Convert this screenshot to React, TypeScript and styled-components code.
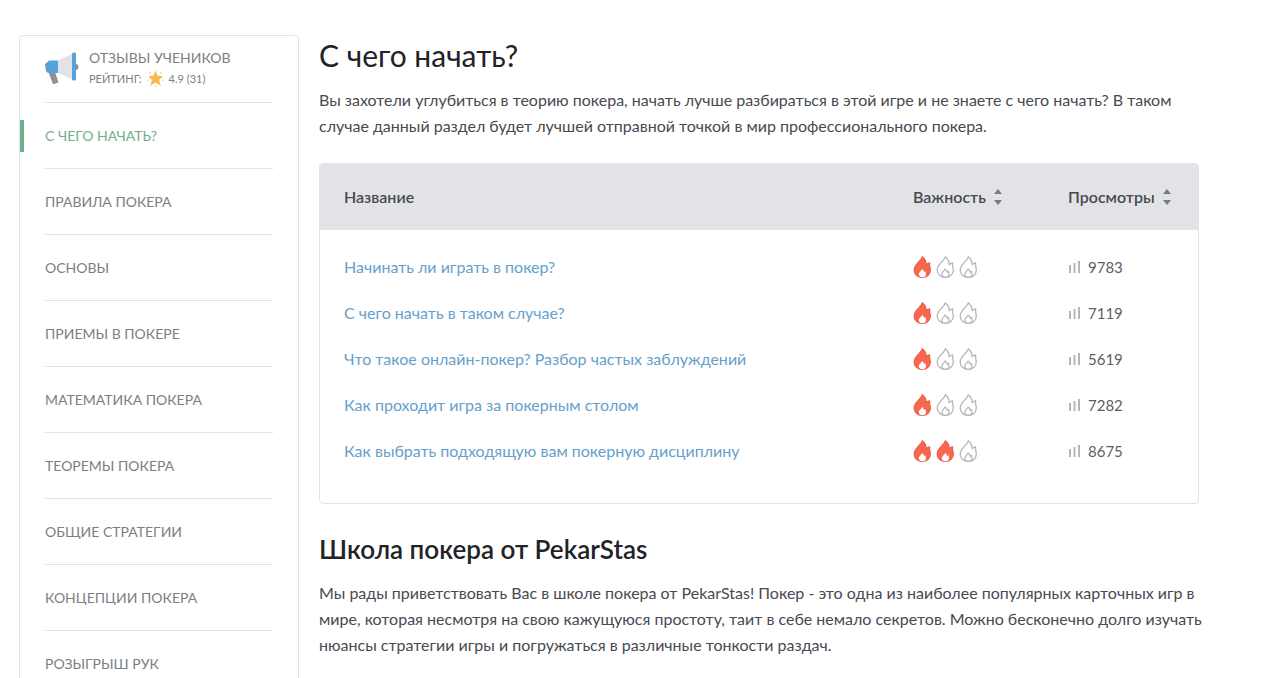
import React from 'react';
import styled, { createGlobalStyle } from 'styled-components';

const GlobalStyle = createGlobalStyle`
  *, *::before, *::after { box-sizing: border-box; }
  html { scrollbar-width: none; }
  body {
    margin: 0;
    background: #fff;
    color: #484a50;
    font-family: Lato, "Liberation Sans", sans-serif;
    font-size: 16px;
    line-height: 26px;
  }
`;

const Page = styled.div`
  display: flex;
  align-items: flex-start;
  gap: 20px;
  min-height: 100vh;
  padding: 35px 87px 0 19px;
`;

const Sidebar = styled.aside`
  flex: 0 0 280px;
  padding: 0 25px 0 0;
  border: 1px solid #e2e3e6;
  border-radius: 4px;
`;

const Reviews = styled.a`
  display: flex;
  align-items: center;
  gap: 10px;
  height: 67px;
  margin-left: 25px;
  padding-bottom: 2px;
  border-bottom: 1px solid #e2e3e6;
  color: #7d7e82;
  font-size: 14px;
  line-height: 21px;
  text-decoration: none;
  text-transform: uppercase;
`;

const Rating = styled.span`
  display: flex;
  align-items: center;
  gap: 5px;
  font-size: 11px;
`;

const Menu = styled.ul`
  margin: 0;
  padding: 0;
  list-style: none;
`;

const MenuItem = styled.li<{ $active?: boolean }>`
  display: flex;
  align-items: center;
  height: 66px;

  &::before {
    content: '';
    flex: 0 0 4px;
    height: 32px;
    margin-right: 21px;
    background: ${(p) => (p.$active ? '#6fae87' : 'transparent')};
  }
`;

const MenuLink = styled.a<{ $active?: boolean }>`
  display: flex;
  flex: 1;
  align-items: center;
  height: 66px;
  border-bottom: 1px solid #e2e3e6;
  color: ${(p) => (p.$active ? '#6fae87' : '#7d7e82')};
  font-size: 14px;
  line-height: 20px;
  text-decoration: none;
  text-transform: uppercase;
`;

const Content = styled.main`
  flex: 1;
  min-width: 0;
`;

const Title = styled.h1`
  margin: 0 0 13px;
  padding-top: 1px;
  color: #222327;
  font-size: 30px;
  font-weight: 400;
  line-height: 38px;
`;

const Subtitle = styled.h2`
  margin: 27px 0 13px;
  color: #222327;
  font-size: 26px;
  font-weight: 600;
  line-height: 36px;
`;

const Text = styled.p`
  margin: 0 -8px 0 0;
`;

const TableCard = styled.div`
  margin-top: 24px;
  padding-bottom: 29px;
  border: 1px solid #e2e3e6;
  border-radius: 4px;
  overflow: hidden;
`;

const Table = styled.table`
  width: 100%;
  border-collapse: collapse;
  table-layout: fixed;
`;

const HeadCell = styled.th<{ $width?: number }>`
  width: ${(p) => (p.$width ? `${p.$width}px` : 'auto')};
  height: 66px;
  padding: 0 0 0 24px;
  background: #e2e3e6;
  font-weight: 600;
  text-align: left;
`;

const SortButton = styled.button`
  display: flex;
  align-items: center;
  gap: 8px;
  padding: 0;
  border: 0;
  background: none;
  color: inherit;
  font: inherit;
  cursor: pointer;
`;

const Cell = styled.td`
  height: 46px;
  padding: 0 0 0 24px;

  tr:first-child > & {
    height: 60px;
    padding-top: 14px;
  }
`;

const TopicLink = styled.a`
  color: #669fcb;
  text-decoration: none;
`;

const Flames = styled.span`
  display: flex;
  gap: 5px;
`;

const Views = styled.span`
  display: flex;
  align-items: center;
  gap: 8px;
  color: #5d5f64;
  font-size: 15px;
`;

const Megaphone = () => (
  <svg width="34" height="34" viewBox="0 0 34 34" aria-hidden="true">
    <circle cx="30.500" cy="16" r="3" fill="#8d9196" />
    <path d="M0 13l3-2v11l-2-2z" fill="#8d9196" />
    <path d="M3 20l7 1 1 3 2.500 7.500-5.500 1.800L4.500 24z" fill="#8d9196" />
    <path d="M13 9.500L27.500 2.500v26L13 22z" fill="#e2e3e6" />
    <path d="M13 9.500V22H4.500C2 22 1 18.500 1 16s1-6.500 4-6.500z" fill="#56a3db" />
    <rect x="27" y="1.500" width="4" height="28" rx="1.500" fill="#56a3db" />
  </svg>
);

const Star = () => (
  <svg width="17" height="17" viewBox="0 0 17 17" aria-hidden="true">
    <path
      d="M8.500 0v3M2 1.500l2 2M15 1.500l-2 2M0 10.500l2-.5M17 10.500l-2-.5M8.500 17v-2M3 16l1-1M14 16l-1-1"
      stroke="#fbdc93"
      strokeWidth="1.200"
    />
    <path
      d="M8.500 2l1.900 4.200 4.600.5-3.400 3.100 1 4.600-4.100-2.400-4.100 2.400 1-4.600L2 6.700l4.600-.5z"
      fill="#f6bb4c"
      stroke="#f6bb4c"
      strokeLinejoin="round"
    />
  </svg>
);

const Flame = ({ on }: { on: boolean }) => (
  <svg width="18" height="22" viewBox="0 0 18 22" aria-hidden="true">
    <path
      d="M9.300.8C8.600 5 1.200 8 1.200 14c0 4.200 3.400 7.300 8.100 7.300s8-3.100 8-7.300c0-2.600-1.300-4-.6-7.200-1.700.1-2.900.8-3.500 1.900-.1-3.200-1.400-6-3.900-7.900z"
      fill={on ? '#f9674f' : '#fff'}
      stroke={on ? '#ea6049' : '#b5b6ba'}
      strokeWidth="1.300"
      strokeLinejoin="round"
    />
    <path
      d="M9 13c-.2 1.800-3.200 2.900-3.200 5.200 0 1.900 1.500 3 3.600 3s3.600-1.100 3.600-3c0-1.100-.5-1.700-.3-2.900-.8.1-1.300.5-1.600 1-.1-1.400-.9-2.600-2.100-3.300z"
      fill="#fff"
      stroke={on ? 'none' : '#b5b6ba'}
      strokeWidth="1.200"
      strokeLinejoin="round"
    />
  </svg>
);

const SortArrows = () => (
  <svg width="8" height="16" viewBox="0 0 8 16" aria-hidden="true">
    <path d="M4 0l4 5H0zM4 16l4-5H0z" fill="#797b82" />
  </svg>
);

const Bars = () => (
  <svg width="12" height="12" viewBox="0 0 12 12" aria-hidden="true">
    <path d="M2 4v8M6.500 2v10M11 0v12" stroke="#b5b6ba" strokeWidth="2" />
  </svg>
);

const sections = [
  'С чего начать?',
  'Правила покера',
  'Основы',
  'Приемы в покере',
  'Математика покера',
  'Теоремы покера',
  'Общие стратегии',
  'Концепции покера',
  'Розыгрыш рук',
];

const topics = [
  { title: 'Начинать ли играть в покер?', level: 1, views: 9783 },
  { title: 'С чего начать в таком случае?', level: 1, views: 7119 },
  { title: 'Что такое онлайн-покер? Разбор частых заблуждений', level: 1, views: 5619 },
  { title: 'Как проходит игра за покерным столом', level: 1, views: 7282 },
  { title: 'Как выбрать подходящую вам покерную дисциплину', level: 2, views: 8675 },
];

export default function App() {
  return (
    <>
      <GlobalStyle />
      <Page>
        <Sidebar>
          <Reviews href="#reviews">
            <Megaphone />
            <span>
              Отзывы учеников
              <Rating>
                Рейтинг: <Star /> 4.9 (31)
              </Rating>
            </span>
          </Reviews>
          <nav>
            <Menu>
              {sections.map((name, i) => (
                <MenuItem key={name} $active={i === 0}>
                  <MenuLink href={`#section-${i}`} $active={i === 0}>
                    {name}
                  </MenuLink>
                </MenuItem>
              ))}
            </Menu>
          </nav>
        </Sidebar>
        <Content>
          <Title>С чего начать?</Title>
          <Text>
            Вы захотели углубиться в теорию покера, начать лучше разбираться в этой игре и не знаете
            с чего начать? В таком случае данный раздел будет лучшей отправной точкой в мир
            профессионального покера.
          </Text>
          <TableCard>
            <Table>
              <thead>
                <tr>
                  <HeadCell scope="col">Название</HeadCell>
                  <HeadCell scope="col" $width={155}>
                    <SortButton type="button">
                      Важность <SortArrows />
                    </SortButton>
                  </HeadCell>
                  <HeadCell scope="col" $width={154}>
                    <SortButton type="button">
                      Просмотры <SortArrows />
                    </SortButton>
                  </HeadCell>
                </tr>
              </thead>
              <tbody>
                {topics.map((topic, i) => (
                  <tr key={topic.title}>
                    <Cell>
                      <TopicLink href={`#topic-${i}`}>{topic.title}</TopicLink>
                    </Cell>
                    <Cell>
                      <Flames role="img" aria-label={`${topic.level} из 3`}>
                        {[1, 2, 3].map((n) => (
                          <Flame key={n} on={n <= topic.level} />
                        ))}
                      </Flames>
                    </Cell>
                    <Cell>
                      <Views>
                        <Bars />
                        {topic.views}
                      </Views>
                    </Cell>
                  </tr>
                ))}
              </tbody>
            </Table>
          </TableCard>
          <Subtitle>Школа покера от PekarStas</Subtitle>
          <Text>
            Мы рады приветствовать Вас в школе покера от PekarStas! Покер - это одна из наиболее
            популярных карточных игр в мире, которая несмотря на свою кажущуюся простоту, таит в
            себе немало секретов. Можно бесконечно долго изучать нюансы стратегии игры и
            погружаться в различные тонкости раздач.
          </Text>
        </Content>
      </Page>
    </>
  );
}
